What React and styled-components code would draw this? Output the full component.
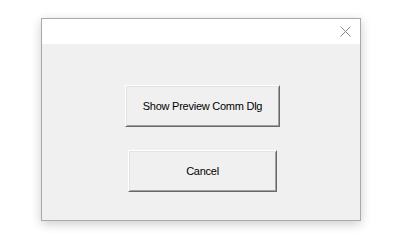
import React from 'react';
import styled, { createGlobalStyle } from 'styled-components';

const GlobalStyle = createGlobalStyle`
  html, body {
    margin: 0;
    padding: 0;
    background: #ffffff;
  }
  body {
    font-family: "Liberation Sans", Arial, sans-serif;
  }
`;

const Page = styled.div`
  width: 396px;
  height: 246px;
  padding: 18px 0 0 41px;
  box-sizing: border-box;
`;

const Window = styled.div`
  width: 320px;
  height: 203px;
  box-sizing: border-box;
  border: 1px solid #a9a9a9;
  background: #f0f0f0;
  display: flex;
  flex-direction: column;
  box-shadow: 0 3px 10px rgba(0, 0, 0, 0.2);
`;

const TitleBar = styled.div`
  height: 25px;
  background: #ffffff;
  display: flex;
  align-items: center;
  justify-content: flex-end;
  padding-right: 9px;
`;

const CloseIcon = styled.svg`
  width: 11px;
  height: 11px;
  display: block;
`;

const Content = styled.div`
  flex: 1;
  display: flex;
  flex-direction: column;
  align-items: center;
  padding: 41px 0 0 3px;
  gap: 23px;
`;

const Button = styled.button`
  width: ${p => p.$width}px;
  height: 42px;
  box-sizing: border-box;
  margin: 0;
  padding: 0;
  background: #f0f0f0;
  border: 1px solid;
  border-color: #ffffff #696969 #696969 #ffffff;
  box-shadow: inset 1px 1px 0 #e3e3e3, inset -1px -1px 0 #a0a0a0;
  font-family: "Liberation Sans", Arial, sans-serif;
  font-size: 11px;
  letter-spacing: -0.25px;
  color: #000000;
  cursor: default;
`;

export default function App() {
  return (
    <>
      <GlobalStyle />
      <Page>
        <Window>
          <TitleBar>
            <CloseIcon viewBox="0 0 11 11">
              <path d="M0.5 0.5 L10.5 10.5 M10.5 0.5 L0.5 10.5" stroke="#8a8a8a" strokeWidth="1" fill="none" />
            </CloseIcon>
          </TitleBar>
          <Content>
            <Button $width={155}>Show Preview Comm Dlg</Button>
            <Button $width={149}>Cancel</Button>
          </Content>
        </Window>
      </Page>
    </>
  );
}
